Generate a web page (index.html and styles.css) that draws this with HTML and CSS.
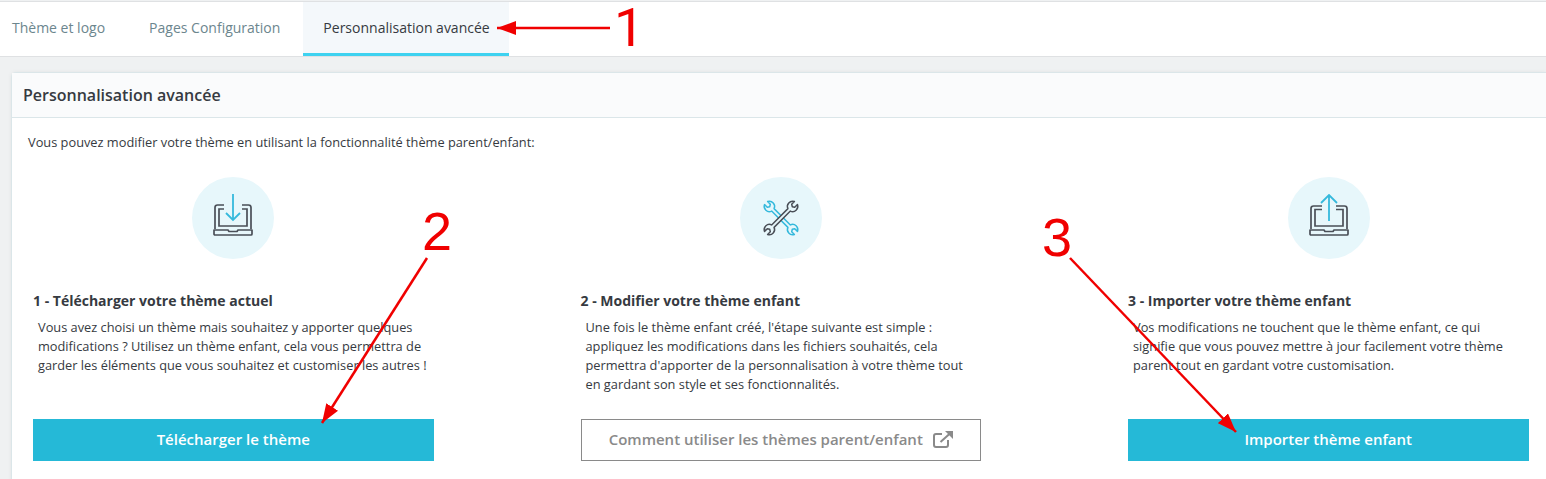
FILE: index.html
```html
<!DOCTYPE html>
<html lang="fr">

<head>
  <meta charset="UTF-8">
  <title>Personnalisation avancée</title>
  <link rel="stylesheet" href="styles.css">
</head>

<body>
  <nav class="tabs">
    <a class="tab">Thème et logo</a>
    <a class="tab">Pages Configuration</a>
    <a class="tab active">Personnalisation avancée</a>
  </nav>

  <main class="content">
    <section class="card">
      <h1 class="card-title">Personnalisation avancée</h1>
      <div class="card-body">
        <p class="intro">Vous pouvez modifier votre thème en utilisant la fonctionnalité thème parent/enfant:</p>
        <div class="steps">
          <div class="step">
            <div class="step-icon">
              <svg class="laptop" width="40" height="42" viewBox="0 0 40 42" fill="none">
                <path d="M11 11H4.500Q2 11 2 13.500V35M29 11H35.500Q38 11 38 13.500V35" stroke="#4a4f57" stroke-width="1.700"/>
                <path d="M11 15H6V32H34V15H29" stroke="#4a4f57" stroke-width="1.700"/>
                <path d="M1 36H15L16 37.500H24L25 36H39V40Q39 41 38 41H2Q1 41 1 40Z" stroke="#4a4f57" stroke-width="1.700" stroke-linejoin="round"/>
                <path d="M20 0V26M13 19L20 26L27 19" stroke="#35b9dc" stroke-width="1.800"/>
              </svg>
            </div>
            <h2 class="step-title">1 - Télécharger votre thème actuel</h2>
            <p class="step-text">Vous avez choisi un thème mais souhaitez y apporter quelques modifications ? Utilisez un thème enfant, cela vous permettra de garder les éléments que vous souhaitez et customiser les autres !</p>
            <a class="btn btn-primary">Télécharger le thème</a>
          </div>
          <div class="step">
            <div class="step-icon">
              <svg width="38" height="38" viewBox="-22 -22 44 44" stroke-width="1.700" stroke-linejoin="round">
                <defs>
                  <path id="wrench" d="M-2 -13.340A6 6 0 0 1 -2.500 -24.460L-2.500 -20L0 -18.500L2.500 -20L2.500 -24.460A6 6 0 0 1 2 -13.340L2 13.340A6 6 0 0 1 2.500 24.460L2.500 20L0 18.500L-2.500 20L-2.500 24.460A6 6 0 0 1 -2 13.340Z"/>
                </defs>
                <use href="#wrench" transform="rotate(-45)" fill="none" stroke="#35b9dc"/>
                <use href="#wrench" transform="rotate(45)" fill="#e7f7fb" stroke="#4a4f57"/>
              </svg>
            </div>
            <h2 class="step-title">2 - Modifier votre thème enfant</h2>
            <p class="step-text">Une fois le thème enfant créé, l'étape suivante est simple : appliquez les modifications dans les fichiers souhaités, cela permettra d'apporter de la personnalisation à votre thème tout en gardant son style et ses fonctionnalités.</p>
            <a class="btn btn-outline">Comment utiliser les thèmes parent/enfant
              <svg class="btn-icon" width="20" height="17" viewBox="0 0 20 17" fill="none" stroke="#8a8a8a" stroke-width="2">
                <path d="M9 3H3Q1 3 1 5V14Q1 16 3 16H13Q15 16 15 14V9"/>
                <path d="M7.500 11L17.500 2"/>
                <path d="M12 0H20V8Z" fill="#8a8a8a" stroke="none"/>
              </svg>
            </a>
          </div>
          <div class="step">
            <div class="step-icon">
              <svg class="laptop" width="40" height="42" viewBox="0 0 40 42" fill="none">
                <path d="M13 12H4.500Q2 12 2 14.500V35M27 12H35.500Q38 12 38 14.500V35" stroke="#4a4f57" stroke-width="1.700"/>
                <path d="M13 15.500H6V32H34V15.500H27" stroke="#4a4f57" stroke-width="1.700"/>
                <path d="M1 36H15L16 37.500H24L25 36H39V40Q39 41 38 41H2Q1 41 1 40Z" stroke="#4a4f57" stroke-width="1.700" stroke-linejoin="round"/>
                <path d="M20 1V27M12 9L20 1L28 9" stroke="#35b9dc" stroke-width="1.800"/>
              </svg>
            </div>
            <h2 class="step-title">3 - Importer votre thème enfant</h2>
            <p class="step-text">Vos modifications ne touchent que le thème enfant, ce qui signifie que vous pouvez mettre à jour facilement votre thème parent tout en gardant votre customisation.</p>
            <a class="btn btn-primary">Importer thème enfant</a>
          </div>
        </div>
      </div>
    </section>
  </main>

  <!-- red annotations drawn over the screenshot -->
  <svg class="marks" width="1546" height="479" viewBox="0 0 1546 479">
    <defs>
      <marker id="head" markerWidth="20" markerHeight="14" refX="19" refY="7" orient="auto" markerUnits="userSpaceOnUse">
        <path d="M0 0L19 7L0 14Z" fill="#f00000"/>
      </marker>
    </defs>
    <g stroke="#f00000" stroke-width="2.500" fill="none">
      <line x1="610" y1="28" x2="497" y2="28" marker-end="url(#head)"/>
      <line x1="427" y1="258" x2="322" y2="423" marker-end="url(#head)"/>
      <line x1="1070" y1="258" x2="1236" y2="432" marker-end="url(#head)"/>
    </g>
  </svg>
  <div class="mark-num mark-one">1</div>
  <div class="mark-num mark-two">2</div>
  <div class="mark-num mark-three">3</div>
</body>

</html>
```

FILE: styles.css
```css
html, body {
  height: 479px;
  overflow: hidden;
}

body {
  font-family: "Open Sans", Arial, sans-serif;
  margin: 0;
  padding: 0;
  background-color: #eff1f2;
  color: #363a41;
  position: relative;
}

/* Tabs */
.tabs {
  display: flex;
  height: 54px;
  margin-top: 1px;
  background-color: #fff;
  border-top: 1px solid #dfe1e3;
  border-bottom: 1px solid #dfe1e3;
}

.tab {
  display: flex;
  align-items: center;
  padding: 0 23px 3px 21px;
  font-size: 14px;
  color: #6c868e;
}

.tab:first-child {
  padding-left: 12px;
  padding-right: 23px;
}

.tab.active {
  padding-left: 20px;
  padding-right: 19.500px;
  color: #363a41;
  background-color: #f4f8fb;
  box-shadow: inset 0 -3px 0 #3ed2f0;
}

/* Card */
.content {
  padding: 15px 0 0 11px;
}

.card {
  background-color: #fff;
  border: 1px solid #dbe6e9;
  border-right: 0;
  border-radius: 5px 0 0 0;
  box-shadow: 0 0 4px rgba(0, 0, 0, 0.06);
}

.card-title {
  margin: 0;
  height: 44px;
  padding: 0 11px;
  font-size: 16px;
  font-weight: 600;
  line-height: 44px;
  color: #363a41;
  background-color: #fafbfc;
  border-bottom: 1px solid #dbe6e9;
}

.card-body {
  padding: 15px 16px 40px 16px;
}

.intro {
  margin: 0;
  font-size: 12.800px;
  line-height: 18px;
}

.steps {
  display: grid;
  grid-template-columns: repeat(3, 400.500px);
  column-gap: 147px;
  margin: 26px 0 0 5px;
}

.step {
  display: flex;
  flex-direction: column;
}

.step-icon {
  display: flex;
  align-items: center;
  justify-content: center;
  width: 82px;
  height: 82px;
  margin: 0 auto;
  border-radius: 50%;
  background-color: #e7f7fb;
}

.step:last-child .step-icon {
  margin-left: 160px;
}

.laptop {
  margin-bottom: 6px;
}

.step-title {
  margin: 33px 0 0;
  font-size: 14px;
  font-weight: 700;
  line-height: 18px;
  color: #363a41;
}

.step-text {
  margin: 8px 0 0 5px;
  height: 101px;
  max-width: 392px;
  font-size: 12.800px;
  line-height: 19px;
}

.btn {
  display: flex;
  align-items: center;
  justify-content: center;
  box-sizing: border-box;
  height: 42px;
  padding-bottom: 2px;
  font-size: 15px;
  font-weight: 600;
}

.btn-primary {
  color: #fff;
  background-color: #25b9d7;
}

.btn-outline {
  color: #8a8a8a;
  background-color: #fff;
  border: 1px solid #8a8a8a;
}

.btn-icon {
  margin-left: 10px;
}

/* Annotations */
.marks {
  position: absolute;
  top: 0;
  left: 0;
}

.mark-num {
  position: absolute;
  font-family: "Liberation Sans", Arial, sans-serif;
  font-size: 54px;
  line-height: 38px;
  color: #f00000;
}

/* the 1 in the reference has no foot */
.mark-one {
  left: 614px;
  top: 9px;
  font-family: Roboto, Arial, sans-serif;
}

.mark-two {
  left: 422px;
  top: 212px;
}

.mark-three {
  left: 1042px;
  top: 218px;
}
```
